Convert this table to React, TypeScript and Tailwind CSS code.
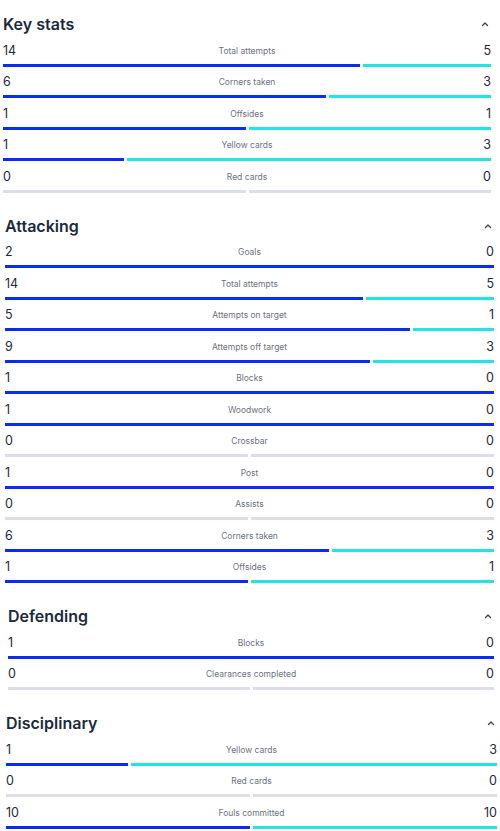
import React from "react";

type Stat = { label: string; home: number; away: number };

type Section = {
  title: string;
  pad: string;
  stats: Stat[];
};

const SECTIONS: Section[] = [
  {
    title: "Key stats",
    pad: "pl-[3px] pr-[9px]",
    stats: [
      { label: "Total attempts", home: 14, away: 5 },
      { label: "Corners taken", home: 6, away: 3 },
      { label: "Offsides", home: 1, away: 1 },
      { label: "Yellow cards", home: 1, away: 3 },
      { label: "Red cards", home: 0, away: 0 },
    ],
  },
  {
    title: "Attacking",
    pad: "pl-[5px] pr-[6px]",
    stats: [
      { label: "Goals", home: 2, away: 0 },
      { label: "Total attempts", home: 14, away: 5 },
      { label: "Attempts on target", home: 5, away: 1 },
      { label: "Attempts off target", home: 9, away: 3 },
      { label: "Blocks", home: 1, away: 0 },
      { label: "Woodwork", home: 1, away: 0 },
      { label: "Crossbar", home: 0, away: 0 },
      { label: "Post", home: 1, away: 0 },
      { label: "Assists", home: 0, away: 0 },
      { label: "Corners taken", home: 6, away: 3 },
      { label: "Offsides", home: 1, away: 1 },
    ],
  },
  {
    title: "Defending",
    pad: "pl-[8px] pr-[6px]",
    stats: [
      { label: "Blocks", home: 1, away: 0 },
      { label: "Clearances completed", home: 0, away: 0 },
    ],
  },
  {
    title: "Disciplinary",
    pad: "pl-[6px] pr-[3px]",
    stats: [
      { label: "Yellow cards", home: 1, away: 3 },
      { label: "Red cards", home: 0, away: 0 },
      { label: "Fouls committed", home: 10, away: 10 },
    ],
  },
];

function ChevronUp() {
  return (
    <svg width="10" height="10" viewBox="0 0 10 10" className="text-[#3b4656]">
      <path
        d="M2.5 6.5 L5 4 L7.5 6.5"
        fill="none"
        stroke="currentColor"
        strokeWidth="1.4"
        strokeLinecap="round"
        strokeLinejoin="round"
      />
    </svg>
  );
}

function StatBar({ home, away }: { home: number; away: number }) {
  if (home === 0 && away === 0) {
    return (
      <div className="flex h-[3px] gap-[3px]">
        <div className="flex-1 bg-[#dcdee9]" />
        <div className="flex-1 bg-[#dcdee9]" />
      </div>
    );
  }
  return (
    <div className="flex h-[3px] gap-[3px]">
      {home > 0 && (
        <div className="bg-[#0a2cf5]" style={{ flexGrow: home, flexBasis: 0 }} />
      )}
      {away > 0 && (
        <div className="bg-[#22e3e6]" style={{ flexGrow: away, flexBasis: 0 }} />
      )}
    </div>
  );
}

function StatRow({ stat }: { stat: Stat }) {
  return (
    <div className="flex h-[31.5px] flex-col pt-[2px]">
      <div className="flex h-4 items-center justify-between">
        <span className="w-10 text-[12.5px] leading-4 text-[#1d2838]">{stat.home}</span>
        <span className="text-[8.5px] leading-4 text-[#6b7280]">{stat.label}</span>
        <span className="w-10 text-right text-[12.5px] leading-4 text-[#1d2838]">
          {stat.away}
        </span>
      </div>
      <div className="mt-[5px]">
        <StatBar home={stat.home} away={stat.away} />
      </div>
    </div>
  );
}

export default function App() {
  return (
    <div
      className="flex min-h-[831px] w-[500px] flex-col gap-[15.5px] bg-white pt-3"
      style={{ fontFamily: "Inter, 'Noto Sans', sans-serif" }}
    >
      {SECTIONS.map((section) => (
        <section key={section.title} className={section.pad}>
          <div className="mb-[4.5px] flex h-6 items-center justify-between">
            <h2 className="text-[16px] font-semibold leading-6 text-[#1b2a3b]">
              {section.title}
            </h2>
            <div className="mr-[1px]">
              <ChevronUp />
            </div>
          </div>
          {section.stats.map((stat) => (
            <StatRow key={stat.label} stat={stat} />
          ))}
        </section>
      ))}
    </div>
  );
}
